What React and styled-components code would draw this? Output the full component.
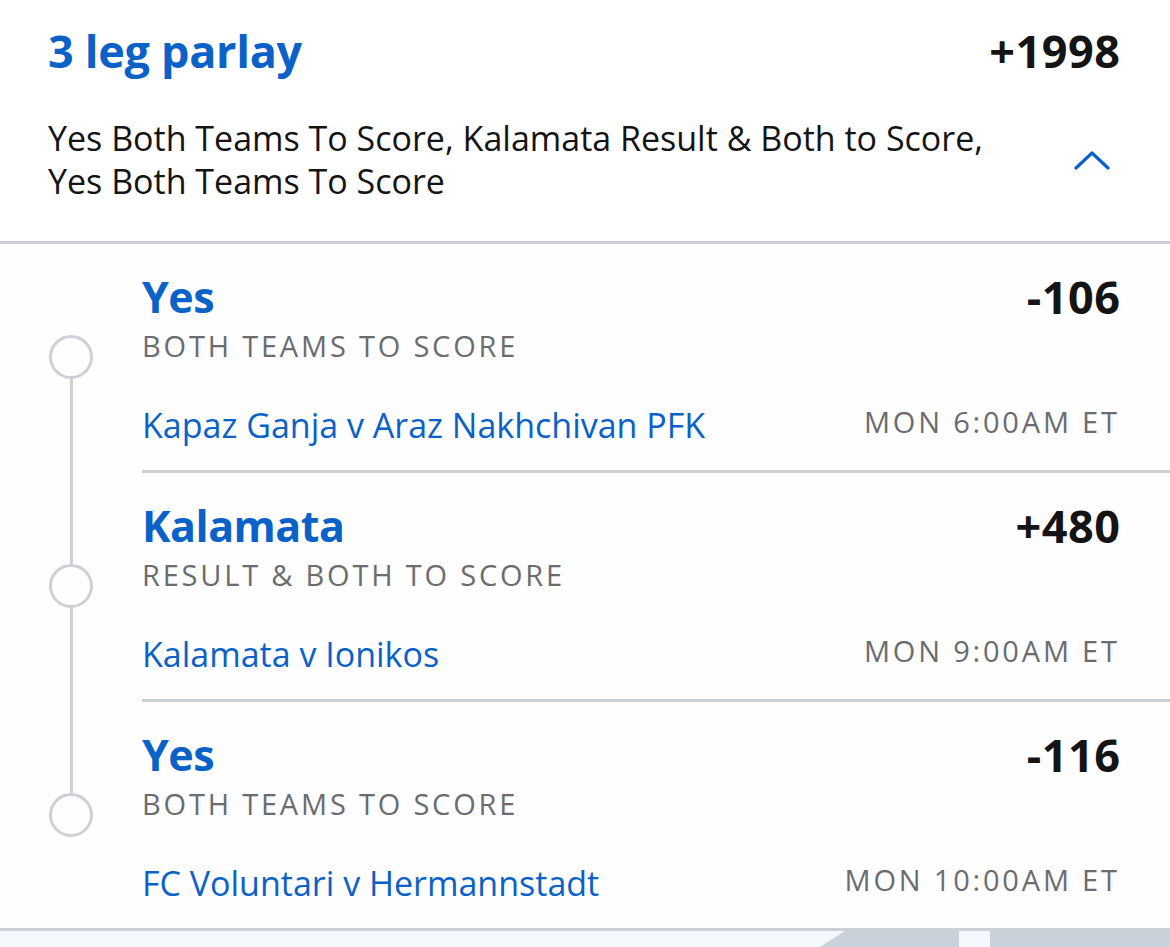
import styled, { createGlobalStyle } from 'styled-components'

const Global = createGlobalStyle`
  body {
    margin: 0;
    background: #ffffff;
    font-family: "Open Sans", "Liberation Sans", sans-serif;
    -webkit-font-smoothing: antialiased;
  }
`

const BLUE = '#0a61c7'
const INK = '#141414'
const GREY = '#6b6c70'
const RULE = '#cdd1d7'

const Card = styled.div`
  width: 1170px;
  background: #fff;
`

const Header = styled.div`
  padding: 24px 50px 38px 48px;
  border-bottom: 3px solid ${RULE};
`

const TitleRow = styled.div`
  display: flex;
  justify-content: space-between;
  align-items: center;
  height: 52px;
`

const Title = styled.div`
  font-size: 45px;
  font-weight: 700;
  color: ${BLUE};
  letter-spacing: -0.3px;
`

const Odds = styled.div`
  font-size: 45px;
  font-weight: 700;
  color: ${INK};
  letter-spacing: 0.5px;
  margin-right: -0.5px;
`

const DescRow = styled.div`
  display: flex;
  align-items: center;
  justify-content: space-between;
  margin-top: 41px;
`

const Desc = styled.div`
  font-size: 34px;
  line-height: 43px;
  color: ${INK};
  width: 960px;
`

const Toggle = styled.button`
  border: 0;
  background: none;
  padding: 0;
  margin-right: 10px;
  display: flex;
  cursor: pointer;
`

const Legs = styled.div`
  background: #fefefe;
`

const Leg = styled.div`
  display: flex;
`

const Rail = styled.div`
  width: 142px;
  flex: none;
  display: flex;
  flex-direction: column;
  align-items: center;
`

const Segment = styled.div`
  width: 3px;
  background: ${p => (p.$hidden ? 'transparent' : RULE)};
  height: ${p => (p.$grow ? 'auto' : '91px')};
  flex: ${p => (p.$grow ? 1 : 'none')};
`

const Dot = styled.div`
  width: 38px;
  height: 38px;
  border: 3px solid ${RULE};
  border-radius: 50%;
  flex: none;
`

const Body = styled.div`
  flex: 1;
  padding: 29px 50px 25px 0;
  border-bottom: ${p => (p.$last ? 'none' : `3px solid ${RULE}`)};
`

const Line = styled.div`
  display: flex;
  justify-content: space-between;
  align-items: center;
  height: 46px;
`

const Pick = styled.div`
  font-size: 43px;
  font-weight: 700;
  color: ${BLUE};
  letter-spacing: -0.5px;
`

const Market = styled.div`
  margin-top: 10px;
  font-size: 29px;
  line-height: 34px;
  color: ${GREY};
  letter-spacing: 2.8px;
  text-transform: uppercase;
`

const EventRow = styled.div`
  margin-top: 42px;
  display: flex;
  justify-content: space-between;
  align-items: flex-start;
  height: 40px;
`

const Event = styled.div`
  font-size: 34px;
  line-height: 40px;
  color: ${BLUE};
`

const When = styled.div`
  font-size: 29px;
  line-height: 34px;
  color: ${GREY};
  letter-spacing: 2.8px;
  margin-right: -2.8px;
  padding-right: 3px;
`

const Footer = styled.div`
  height: 16px;
  border-top: 3px solid ${RULE};
  background: #f4f7fb;
  display: flex;
`

const ChevronUp = () => (
  <svg width="36" height="22" viewBox="0 0 36 22" fill="none">
    <path d="M2 19 L18 4 L34 19" stroke={BLUE} strokeWidth="3.2" strokeLinecap="round" strokeLinejoin="round" />
  </svg>
)

const legs = [
  { pick: 'Yes', odds: '-106', market: 'Both Teams To Score', event: 'Kapaz Ganja v Araz Nakhchivan PFK', when: 'MON 6:00AM ET' },
  { pick: 'Kalamata', odds: '+480', market: 'Result & Both To Score', event: 'Kalamata v Ionikos', when: 'MON 9:00AM ET' },
  { pick: 'Yes', odds: '-116', market: 'Both Teams To Score', event: 'FC Voluntari v Hermannstadt', when: 'MON 10:00AM ET' },
]

export default function App() {
  return (
    <Card>
      <Global />
      <Header>
        <TitleRow>
          <Title>3 leg parlay</Title>
          <Odds>+1998</Odds>
        </TitleRow>
        <DescRow>
          <Desc>Yes Both Teams To Score, Kalamata Result &amp; Both to Score, Yes Both Teams To Score</Desc>
          <Toggle aria-label="collapse">
            <ChevronUp />
          </Toggle>
        </DescRow>
      </Header>
      <Legs>
        {legs.map((l, i) => (
          <Leg key={i}>
            <Rail>
              <Segment $hidden={i === 0} />
              <Dot />
              <Segment $grow $hidden={i === legs.length - 1} />
            </Rail>
            <Body $last={i === legs.length - 1}>
              <Line>
                <Pick>{l.pick}</Pick>
                <Odds>{l.odds}</Odds>
              </Line>
              <Market>{l.market}</Market>
              <EventRow>
                <Event>{l.event}</Event>
                <When>{l.when}</When>
              </EventRow>
            </Body>
          </Leg>
        ))}
      </Legs>
      <Footer>
        <svg width="1170" height="16" viewBox="0 0 1170 16">
          <polygon points="820,16 845,0 959,0 959,16" fill="#c9d1da" />
          <rect x="990" y="0" width="180" height="16" fill="#c9d1da" />
        </svg>
      </Footer>
    </Card>
  )
}
